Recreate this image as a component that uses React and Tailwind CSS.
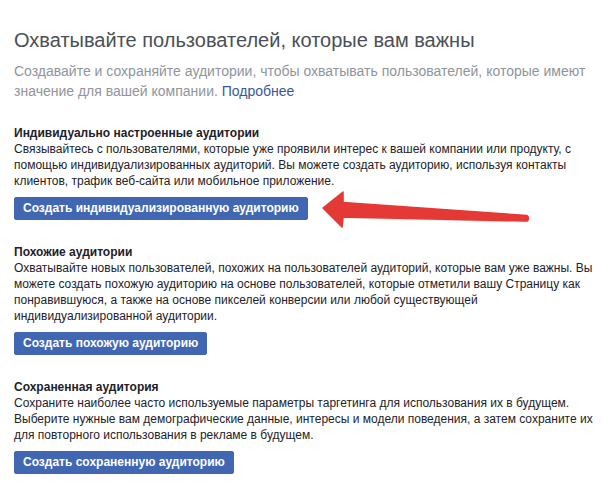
export default function App() {
  const sections = [
    {
      title: 'Индивидуально настроенные аудитории',
      lines: [
        'Связывайтесь с пользователями, которые уже проявили интерес к вашей компании или продукту, с',
        'помощью индивидуализированных аудиторий. Вы можете создать аудиторию, используя контакты',
        'клиентов, трафик веб-сайта или мобильное приложение.',
      ],
      button: 'Создать индивидуализированную аудиторию',
    },
    {
      title: 'Похожие аудитории',
      lines: [
        'Охватывайте новых пользователей, похожих на пользователей аудиторий, которые вам уже важны. Вы',
        'можете создать похожую аудиторию на основе пользователей, которые отметили вашу Страницу как',
        'понравившуюся, а также на основе пикселей конверсии или любой существующей',
        'индивидуализированной аудитории.',
      ],
      button: 'Создать похожую аудиторию',
    },
    {
      title: 'Сохраненная аудитория',
      lines: [
        'Сохраните наиболее часто используемые параметры таргетинга для использования их в будущем.',
        'Выберите нужные вам демографические данные, интересы и модели поведения, а затем сохраните их',
        'для повторного использования в рекламе в будущем.',
      ],
      button: 'Создать сохраненную аудиторию',
    },
  ]

  return (
    <div className="relative w-[612px] h-[492px] bg-white overflow-hidden font-['Liberation_Sans',Arial,sans-serif]">
      <div className="pl-[14px] pt-[27px]">
        <h1 className="text-[20px] leading-[26px] text-[#4b4f56]">
          Охватывайте пользователей, которые вам важны
        </h1>
        <p className="mt-[8px] text-[14px] leading-[20px] text-[#90949c]">
          Создавайте и сохраняйте аудитории, чтобы охватывать пользователей, которые имеют
          <br />
          значение для вашей компании. <span className="text-[#365899]">Подробнее</span>
        </p>

        <div className="mt-[24px] flex flex-col gap-[24px]">
          {sections.map((s) => (
            <section key={s.title}>
              <h2 className="text-[12px] leading-[16px] font-bold text-[#1d2129]">{s.title}</h2>
              <p className="text-[12px] leading-[16px] text-[#1d2129]">
                {s.lines.map((l, i) => (
                  <span key={i} className="block whitespace-nowrap">{l}</span>
                ))}
              </p>
              <button className="mt-[8px] h-[23px] px-[8px] rounded-[2px] bg-[#4267b2] border border-[#4267b2] text-white text-[12px] font-bold leading-[21px]">
                {s.button}
              </button>
            </section>
          ))}
        </div>
      </div>

      {/* red annotation arrow */}
      <svg className="absolute left-0 top-0 pointer-events-none" width="612" height="492">
        <path
          d="M324 209.5 L344 193.5 L344 204 L528 217 Q531 219.5 528 222.5 L344 218.5 L343 228.5 Z"
          fill="#000"
          opacity="0.12"
        />
        <path
          d="M323 208 L343 192 L343 202.5 L527 215.5 Q530 218 527 221 L343 217 L342 227 Z"
          fill="#e53935"
          stroke="#e53935"
          strokeWidth="1.5"
          strokeLinejoin="round"
        />
      </svg>
    </div>
  )
}
